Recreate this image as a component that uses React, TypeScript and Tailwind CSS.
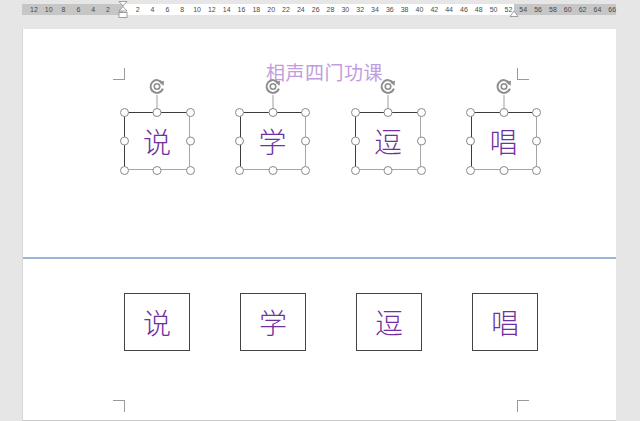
import React from "react";

const CJK = { fontFamily: '"Noto Sans CJK SC", "Noto Sans", sans-serif' };
const chars = ["说", "学", "逗", "唱"];
const leftNums = [12, 10, 8, 6, 4, 2];
const rightNums = Array.from({ length: 33 }, (_, i) => (i + 1) * 2);

function Handle({ cls }: { cls: string }) {
  return (
    <span
      className={`absolute w-[9px] h-[9px] rounded-full bg-white border-[1.2px] border-[#8a8a8a] ${cls}`}
    />
  );
}

function RotateIcon() {
  return (
    <svg width="17" height="17" viewBox="0 0 16 16" className="block">
      <path
        d="M12.9 4.6 A6 6 0 1 0 13.6 10"
        fill="none"
        stroke="#8e8e8e"
        strokeWidth="1.9"
      />
      <path d="M10 4.2 L14.6 2.6 L14.2 7.4 Z" fill="#8e8e8e" />
      <circle cx="8" cy="8" r="2.6" fill="none" stroke="#8e8e8e" strokeWidth="1.5" />
    </svg>
  );
}

function SelectedBox({ ch }: { ch: string }) {
  return (
    <div className="relative w-[66px] h-[58px]">
      <div className="absolute left-1/2 -translate-x-1/2 -top-[34px] flex flex-col items-center">
        <RotateIcon />
        <div className="w-px h-[17px] bg-[#a0a0a0]" />
      </div>
      <div
        className="w-full h-full flex items-center justify-center border-l-[1.5px] border-t-[1.5px] border-r border-b border-l-[#3c3c3c] border-t-[#3c3c3c] border-r-[#a6a6a6] border-b-[#a6a6a6] text-[28px] leading-none font-light text-[#7030a0]"
        style={CJK}
      >
        {ch}
      </div>
      <Handle cls="-left-[4.5px] -top-[4.5px]" />
      <Handle cls="left-1/2 -translate-x-1/2 -top-[4.5px]" />
      <Handle cls="-right-[4.5px] -top-[4.5px]" />
      <Handle cls="-left-[4.5px] top-1/2 -translate-y-1/2" />
      <Handle cls="-right-[4.5px] top-1/2 -translate-y-1/2" />
      <Handle cls="-left-[4.5px] -bottom-[4.5px]" />
      <Handle cls="left-1/2 -translate-x-1/2 -bottom-[4.5px]" />
      <Handle cls="-right-[4.5px] -bottom-[4.5px]" />
    </div>
  );
}

function PlainBox({ ch }: { ch: string }) {
  return (
    <div
      className="w-[66px] h-[58px] flex items-center justify-center border-[1.5px] border-[#444444] text-[28px] leading-none font-light text-[#7030a0]"
      style={CJK}
    >
      {ch}
    </div>
  );
}

export default function App() {
  return (
    <div className="relative w-[640px] h-[421px] bg-[#e6e6e6] overflow-hidden">
      {/* Ruler */}
      <div className="relative ml-[22px] mt-[4px] w-[594px] h-[11px] bg-[linear-gradient(to_right,#c6c6c6_101px,#ffffff_101px,#ffffff_492px,#c6c6c6_492px)]">
        <div
          className="flex h-full items-center pl-[4.5px] text-[7px] leading-none text-[#4a4a4a]"
          style={{ fontFamily: '"Liberation Sans", Arial, sans-serif' }}
        >
          {leftNums.map((n) => (
            <span key={"l" + n} className="w-[14.84px] shrink-0 text-center">
              {n}
            </span>
          ))}
          <span className="w-[14.84px] shrink-0" />
          {rightNums.map((n) => (
            <span key={"r" + n} className="w-[14.84px] shrink-0 text-center">
              {n}
            </span>
          ))}
        </div>
        {/* indent marker */}
        <svg
          width="10"
          height="20"
          viewBox="0 0 10 20"
          className="absolute left-[96px] -top-[3px]"
        >
          <path d="M1 0.5 H9 L5 5 Z" fill="#fff" stroke="#8a8a8a" strokeWidth="0.8" />
          <path d="M5 5.5 L1 10 H9 Z" fill="#fff" stroke="#8a8a8a" strokeWidth="0.8" />
          <rect x="1" y="11.5" width="8" height="5" fill="#fff" stroke="#8a8a8a" strokeWidth="0.8" />
        </svg>
        {/* right margin marker */}
        <svg
          width="10"
          height="8"
          viewBox="0 0 10 8"
          className="absolute left-[487px] top-[5px]"
        >
          <path d="M1 7.5 H9 L5 2 Z" fill="#fff" stroke="#8a8a8a" strokeWidth="0.8" />
        </svg>
      </div>

      {/* Page */}
      <div className="relative ml-[22px] mt-[14px] w-[594px] h-[392px] bg-white border-l border-[#d6d6d6] border-b border-b-[#c8c8c8] flex flex-col">
        {/* top page part */}
        <div className="relative h-[228px] flex flex-col">
          <div
            className="mt-[33px] ml-[243px] text-[19px] leading-none text-[#bf9de0] tracking-[0.5px]"
            style={CJK}
          >
            相声四门功课
          </div>
          <div className="mt-[31px] ml-[101px] flex gap-[49.5px]">
            {chars.map((c) => (
              <SelectedBox key={c} ch={c} />
            ))}
          </div>
          {/* margin corners */}
          <span className="absolute left-[90px] top-[39px] w-[12px] h-[12px] border-r border-b border-[#9a9a9a]" />
          <span className="absolute left-[494px] top-[39px] w-[12px] h-[12px] border-l border-b border-[#9a9a9a]" />
        </div>
        {/* page separator */}
        <div className="h-[2px] bg-[#9db3d8]" />
        {/* bottom page part */}
        <div className="relative flex-1">
          <div className="mt-[34px] ml-[101px] flex gap-[50px]">
            {chars.map((c) => (
              <PlainBox key={c} ch={c} />
            ))}
          </div>
          <span className="absolute left-[90px] top-[141px] w-[12px] h-[12px] border-r border-t border-[#9a9a9a]" />
          <span className="absolute left-[494px] top-[141px] w-[12px] h-[12px] border-l border-t border-[#9a9a9a]" />
        </div>
      </div>
    </div>
  );
}
